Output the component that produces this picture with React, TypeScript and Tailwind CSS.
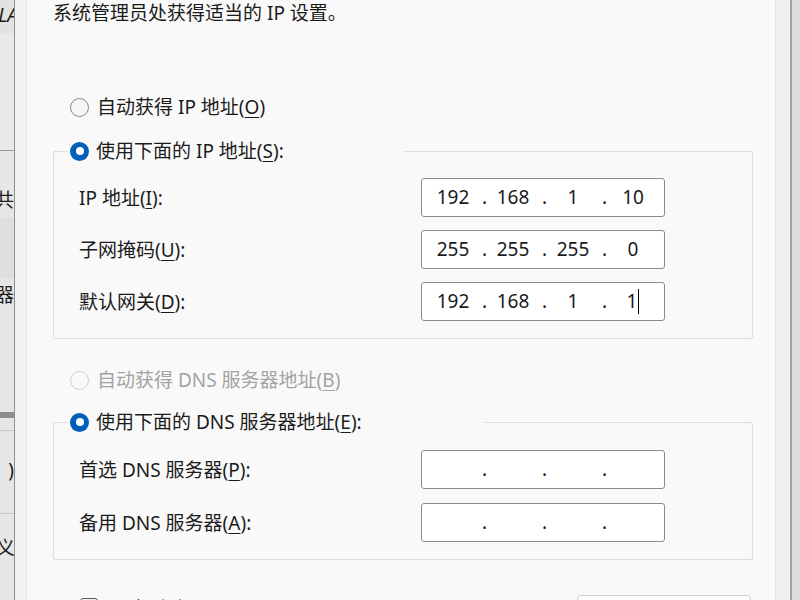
import React, { Fragment } from "react";

const FONT = { fontFamily: '"Noto Sans", "Noto Sans CJK SC", sans-serif' };

function Radio({ state }: { state: "on" | "off" | "disabled" }) {
  if (state === "on")
    return (
      <span className="w-[19px] h-[19px] rounded-full bg-[#005fb8] flex items-center justify-center shrink-0">
        <span className="w-[8px] h-[8px] rounded-full bg-white" />
      </span>
    );
  if (state === "off")
    return <span className="w-[19px] h-[19px] rounded-full border border-[#8a8a8a] bg-[#f6f6f6] shrink-0" />;
  return <span className="w-[19px] h-[19px] rounded-full border border-[#cfcfcf] shrink-0" />;
}

function U({ children }: { children: React.ReactNode }) {
  return <span className="underline underline-offset-[3px] decoration-1">{children}</span>;
}

function IpBox({ vals, caret }: { vals: string[]; caret?: boolean }) {
  return (
    <div className="w-[244px] h-[39px] bg-white border border-[#8c8c8c] rounded-[3px] flex items-center pl-[5px] text-[19px] text-[#1b1b1b] shrink-0">
      {vals.map((v, i) => (
        <Fragment key={i}>
          <span className="w-[52px] text-center flex items-center justify-center h-full">
            <span>{v}</span>
            {caret && i === 3 && <span className="w-px h-[25px] bg-black ml-[1px]" />}
          </span>
          {i < 3 && <span className="w-[8px] text-right">.</span>}
        </Fragment>
      ))}
    </div>
  );
}

function Row({ label, vals, caret }: { label: React.ReactNode; vals: string[]; caret?: boolean }) {
  return (
    <div className="flex items-center h-[39px]">
      <div className="w-[342px] text-[19px] leading-[26px]">{label}</div>
      <IpBox vals={vals} caret={caret} />
    </div>
  );
}

function LeftStrip() {
  return (
    <div className="w-[14px] h-full flex flex-col overflow-hidden text-[19px] leading-[20px] text-[#1b1b1b] shrink-0">
      <div className="h-[33px] bg-[#e2e2e2] flex justify-end pt-[5px] shrink-0">
        <span className="whitespace-nowrap mr-[-4px] italic">WLA</span>
      </div>
      <div className="h-[117px] bg-[#e9e9e9] shrink-0" />
      <div className="h-px bg-[#9c9c9c] shrink-0" />
      <div className="h-[67px] bg-[#e6e6e6] flex justify-end pt-[39px] shrink-0">
        <span className="whitespace-nowrap">共</span>
      </div>
      <div className="h-[60px] bg-[#dedede] shrink-0" />
      <div className="h-[134px] bg-[#e6e6e6] flex justify-end pt-[7px] shrink-0">
        <span className="whitespace-nowrap">器</span>
      </div>
      <div className="h-[6px] bg-[#8c8c8c] shrink-0" />
      <div className="h-[12px] bg-[#e6e6e6] shrink-0" />
      <div className="h-px bg-[#c8c8c8] shrink-0" />
      <div className="h-[82px] bg-[#e6e6e6] flex justify-end pt-[29px] shrink-0">
        <span className="whitespace-nowrap">)</span>
      </div>
      <div className="h-px bg-[#c8c8c8] shrink-0" />
      <div className="flex-1 bg-[#e6e6e6] flex justify-end pt-[24px]">
        <span className="whitespace-nowrap mr-[-6px]">定义:</span>
      </div>
    </div>
  );
}

export default function App() {
  return (
    <div className="w-[800px] h-[600px] overflow-hidden flex bg-[#f9f9f9]" style={FONT}>
      <LeftStrip />
      <div className="w-px h-full bg-[#8f8f8f] shrink-0" />
      <div className="w-[12px] h-full bg-[#f2f2f2] border-r border-[#e8e8e8] shrink-0" />
      <div className="w-[748px] h-full bg-[#f9f9f9] pl-[26px] pr-[22px] flex flex-col text-[#1b1b1b] shrink-0">
        <div className="h-[26px] leading-[26px] text-[19px] whitespace-nowrap shrink-0">
          系统管理员处获得适当的 IP 设置。
        </div>

        <div className="mt-[68px] h-[26px] flex items-center gap-[8px] pl-[17px] text-[19px] shrink-0">
          <Radio state="off" />
          <span>
            自动获得 IP 地址(<U>O</U>)
          </span>
        </div>

        <fieldset className="mt-[18px] border border-[#dcdcdc] rounded-[2px] shrink-0">
          <legend className="ml-[13px] w-[338px] h-[26px] flex items-center gap-[7px] pl-[3px] text-[19px]">
            <Radio state="on" />
            <span>
              使用下面的 IP 地址(<U>S</U>):
            </span>
          </legend>
          <div className="pl-[25px] pt-[14px] pb-[17px] flex flex-col gap-[13px]">
            <Row
              label={
                <>
                  IP 地址(<U>I</U>):
                </>
              }
              vals={["192", "168", "1", "10"]}
            />
            <Row
              label={
                <>
                  子网掩码(<U>U</U>):
                </>
              }
              vals={["255", "255", "255", "0"]}
            />
            <Row
              label={
                <>
                  默认网关(<U>D</U>):
                </>
              }
              vals={["192", "168", "1", "1"]}
              caret
            />
          </div>
        </fieldset>

        <div className="mt-[28px] h-[26px] flex items-center gap-[8px] pl-[17px] text-[19px] text-[#a3a3a3] shrink-0">
          <Radio state="disabled" />
          <span>
            自动获得 DNS 服务器地址(<U>B</U>)
          </span>
        </div>

        <fieldset className="mt-[16px] border border-[#dcdcdc] rounded-[2px] shrink-0">
          <legend className="ml-[13px] w-[418px] h-[26px] flex items-center gap-[7px] pl-[3px] text-[19px]">
            <Radio state="on" />
            <span>
              使用下面的 DNS 服务器地址(<U>E</U>):
            </span>
          </legend>
          <div className="pl-[25px] pt-[15px] pb-[17px] flex flex-col gap-[14px]">
            <Row
              label={
                <>
                  首选 DNS 服务器(<U>P</U>):
                </>
              }
              vals={["", "", "", ""]}
            />
            <Row
              label={
                <>
                  备用 DNS 服务器(<U>A</U>):
                </>
              }
              vals={["", "", "", ""]}
            />
          </div>
        </fieldset>

        <div className="mt-[35px] flex items-start justify-between shrink-0">
          <div className="flex items-start gap-[12px] pl-[27px] pt-[3px]">
            <span className="w-[18px] h-[18px] rounded-[3px] border border-[#5c5c5c] bg-[#f3f3f3] shrink-0" />
            <span className="text-[19px] leading-[20px] mt-[1px]">退出时验证设置(L)</span>
          </div>
          <div className="w-[174px] h-[34px] mr-[2px] rounded-[4px] border border-[#d2d2d2] bg-[#fdfdfd] flex items-center justify-center text-[19px]">
            高级(V)...
          </div>
        </div>
      </div>
      <div className="w-[15px] h-full bg-[#efefef] border-l border-[#e2e2e2] shrink-0" />
      <div className="w-[2px] h-full bg-[#a3a3a3] shrink-0" />
      <div className="flex-1 h-full bg-[#dcdcdc]" />
    </div>
  );
}
